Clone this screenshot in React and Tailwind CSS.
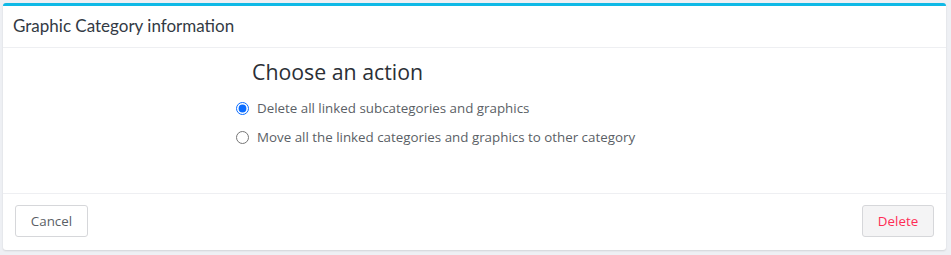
import React, { useState } from "react";

const options = [
  { id: "delete", label: "Delete all linked subcategories and graphics" },
  { id: "move", label: "Move all the linked categories and graphics to other category" },
];

const App = () => {
  const [action, setAction] = useState("delete");

  return (
    <div className="min-h-[255px] w-full bg-[#eef0f4] p-[3px] pr-[5px] font-['Open_Sans',sans-serif]">
      <div className="rounded-[3px] border-t-[3px] border-[#0fb9e6] bg-white shadow-[0_1px_2px_rgba(0,0,0,0.12)]">
        <div className="h-[42px] border-b border-[#eeeff2] px-[10px] pt-[10px] font-['Lato',sans-serif] text-[17px] leading-5 text-[#333a44]">
          Graphic Category information
        </div>

        <div className="h-[146px] border-b border-[#eeeff2] pl-[233px] pt-[10px]">
          <h2 className="pl-[16px] text-[21.3px] leading-7 text-[#2b2f36]">Choose an action</h2>
          <div className="mt-[12px] flex flex-col gap-[9px]">
            {options.map((o) => (
              <label key={o.id} className="flex items-center gap-[8px] text-[13.35px] leading-5 text-[#5b5f66]">
                <input
                  type="radio"
                  name="action"
                  checked={action === o.id}
                  onChange={() => setAction(o.id)}
                  className="m-0 h-[13px] w-[13px] accent-[#0a6cff]"
                />
                {o.label}
              </label>
            ))}
          </div>
        </div>

        <div className="flex items-center justify-between px-[12px] pt-[11px] pb-[13px]">
          <button className="h-[32px] w-[73px] rounded-[3px] border border-[#d6d7da] bg-white text-[13.35px] text-[#5b5f66]">
            Cancel
          </button>
          <button className="h-[32px] w-[72px] rounded-[3px] border border-[#d6d7da] bg-[#f4f4f5] text-[13.35px] text-[#ff2d55]">
            Delete
          </button>
        </div>
      </div>
    </div>
  );
};

export default App;
